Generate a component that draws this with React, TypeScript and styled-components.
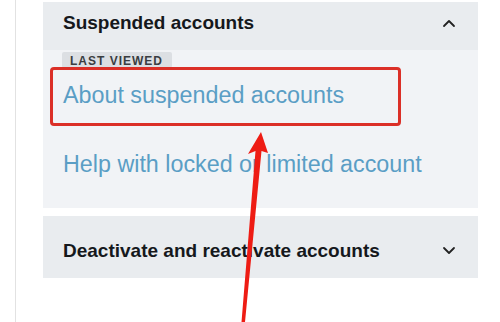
import React from "react";
import styled, { createGlobalStyle } from "styled-components";

const Global = createGlobalStyle`
  html, body { margin: 0; padding: 0; background: #ffffff; }
  body { font-family: "Liberation Sans", Arial, Helvetica, sans-serif; }
`;

const Page = styled.div`
  position: relative;
  width: 500px;
  height: 322px;
  overflow: hidden;
  display: flex;
  background: #ffffff;
`;

const Rule = styled.div`
  width: 1px;
  margin-left: 15px;
  background: #e2e2e2;
  align-self: stretch;
`;

const Panel = styled.div`
  margin-left: 27px;
  margin-top: 2px;
  width: 435px;
  display: flex;
  flex-direction: column;
`;

const Header = styled.div<{ $top: number; $bottom: number }>`
  display: flex;
  align-items: center;
  justify-content: space-between;
  padding: ${(p) => p.$top}px 22px ${(p) => p.$bottom}px 20px;
  background: #e9ecef;
`;

const Title = styled.div`
  font-size: 19px;
  line-height: 24px;
  font-weight: 700;
  color: #15181c;
`;

const Chevron = styled.svg`
  width: 14px;
  height: 10px;
  flex: none;
`;

const Body = styled.div`
  background: #f1f3f6;
  padding: 2px 20px 30px 19px;
  display: flex;
  flex-direction: column;
  align-items: flex-start;
`;

const Badge = styled.div`
  height: 16px;
  padding: 0 9px 0 8px;
  background: #dcdfe3;
  border-radius: 2px;
  font-size: 12px;
  font-weight: 700;
  letter-spacing: 1px;
  color: #3a3d41;
  line-height: 18px;
  margin-bottom: 13px;
  overflow: hidden;
`;

const Link = styled.a<{ $gap: number }>`
  display: block;
  margin-left: 1px;
  margin-top: ${(p) => p.$gap}px;
  font-size: 23.3px;
  line-height: 28px;
  color: #5a9ec5;
  text-decoration: none;
`;

const Spacer = styled.div`
  height: 8px;
  background: #ffffff;
`;

const Highlight = styled.div`
  position: absolute;
  left: 50px;
  top: 67px;
  width: 345px;
  height: 53px;
  border: 3px solid #db2f27;
  border-radius: 4px;
  pointer-events: none;
`;

const Arrow = styled.svg`
  position: absolute;
  left: 0;
  top: 0;
  width: 500px;
  height: 322px;
  pointer-events: none;
`;

const Up = () => (
  <Chevron viewBox="0 0 14 10">
    <path d="M2 8 L7 3 L12 8" fill="none" stroke="#222" strokeWidth="1.8" strokeLinecap="round" strokeLinejoin="round" />
  </Chevron>
);

const Down = () => (
  <Chevron viewBox="0 0 14 10">
    <path d="M2 2 L7 7 L12 2" fill="none" stroke="#222" strokeWidth="1.8" strokeLinecap="round" strokeLinejoin="round" />
  </Chevron>
);

export default function App() {
  return (
    <>
      <Global />
      <Page>
        <Rule />
        <Panel>
          <Header $top={9} $bottom={15}>
            <Title>Suspended accounts</Title>
            <Up />
          </Header>
          <Body>
            <Badge>LAST VIEWED</Badge>
            <Link $gap={0}>About suspended accounts</Link>
            <Link $gap={41}>Help with locked or limited account</Link>
          </Body>
          <Spacer />
          <Header $top={23} $bottom={15}>
            <Title>Deactivate and reactivate accounts</Title>
            <Down />
          </Header>
        </Panel>
        <Highlight />
        <Arrow viewBox="0 0 500 322">
          <path
            d="M261 132 L268 153 L261.5 151 L245 322 L241.5 322 L255.5 151 L248 154 Z"
            fill="#ee1c14"
          />
        </Arrow>
      </Page>
    </>
  );
}
